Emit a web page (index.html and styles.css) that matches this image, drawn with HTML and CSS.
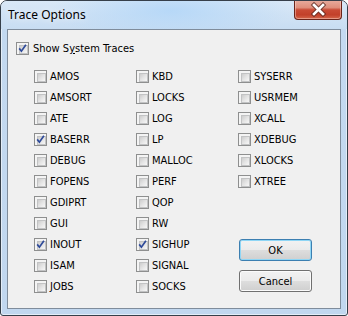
FILE: index.html
```html
<!DOCTYPE html>
<html>
<head>
<meta charset="utf-8">
<link rel="stylesheet" href="styles.css">
</head>
<body>
<div class="window">
  <div class="titlebar">
    <span class="title">Trace Options</span>
    <div class="close">
      <svg width="45" height="18" viewBox="0 0 45 18">
        <path d="M18 4 L27 13 M27 4 L18 13" stroke="#5a2a22" stroke-width="4.6" stroke-linecap="square" fill="none" opacity="0.75"/>
        <path d="M18 4 L27 13 M27 4 L18 13" stroke="#ffffff" stroke-width="2.6" stroke-linecap="square" fill="none"/>
      </svg>
    </div>
  </div>
  <div class="frame">
    <div class="client">
      <div class="check header">
        <span class="cb checked"><svg width="11" height="11" viewBox="0 0 11 11"><path d="M2.2 5.4 L4.4 8.2 L8.9 1.8" stroke="#2f4b9a" stroke-width="1.7" fill="none"/></svg></span>
        <span>Show S<u>y</u>stem Traces</span>
      </div>
      <div class="grid">
        <div class="check"><span class="cb"></span><span>AMOS</span></div>
        <div class="check"><span class="cb"></span><span>AMSORT</span></div>
        <div class="check"><span class="cb"></span><span>ATE</span></div>
        <div class="check"><span class="cb checked"><svg width="11" height="11" viewBox="0 0 11 11"><path d="M2.2 5.4 L4.4 8.2 L8.9 1.8" stroke="#2f4b9a" stroke-width="1.7" fill="none"/></svg></span><span>BASERR</span></div>
        <div class="check"><span class="cb"></span><span>DEBUG</span></div>
        <div class="check"><span class="cb"></span><span>FOPENS</span></div>
        <div class="check"><span class="cb"></span><span>GDIPRT</span></div>
        <div class="check"><span class="cb"></span><span>GUI</span></div>
        <div class="check"><span class="cb checked"><svg width="11" height="11" viewBox="0 0 11 11"><path d="M2.2 5.4 L4.4 8.2 L8.9 1.8" stroke="#2f4b9a" stroke-width="1.7" fill="none"/></svg></span><span>INOUT</span></div>
        <div class="check"><span class="cb"></span><span>ISAM</span></div>
        <div class="check"><span class="cb"></span><span>JOBS</span></div>

        <div class="check"><span class="cb"></span><span>KBD</span></div>
        <div class="check"><span class="cb"></span><span>LOCKS</span></div>
        <div class="check"><span class="cb"></span><span>LOG</span></div>
        <div class="check"><span class="cb"></span><span>LP</span></div>
        <div class="check"><span class="cb"></span><span>MALLOC</span></div>
        <div class="check"><span class="cb"></span><span>PERF</span></div>
        <div class="check"><span class="cb"></span><span>QOP</span></div>
        <div class="check"><span class="cb"></span><span>RW</span></div>
        <div class="check"><span class="cb checked"><svg width="11" height="11" viewBox="0 0 11 11"><path d="M2.2 5.4 L4.4 8.2 L8.9 1.8" stroke="#2f4b9a" stroke-width="1.7" fill="none"/></svg></span><span>SIGHUP</span></div>
        <div class="check"><span class="cb"></span><span>SIGNAL</span></div>
        <div class="check"><span class="cb"></span><span>SOCKS</span></div>

        <div class="check"><span class="cb"></span><span>SYSERR</span></div>
        <div class="check"><span class="cb"></span><span>USRMEM</span></div>
        <div class="check"><span class="cb"></span><span>XCALL</span></div>
        <div class="check"><span class="cb"></span><span>XDEBUG</span></div>
        <div class="check"><span class="cb"></span><span>XLOCKS</span></div>
        <div class="check"><span class="cb"></span><span>XTREE</span></div>

        <div class="buttons">
          <button class="btn default">OK</button>
          <button class="btn">Cancel</button>
        </div>
      </div>
    </div>
  </div>
</div>
</body>
</html>
```

FILE: styles.css
```css
html, body {
  margin: 0;
  padding: 0;
  background: #ffffff;
}

.window {
  width: 348px;
  height: 316px;
  box-sizing: border-box;
  border: 1px solid #363f4a;
  border-radius: 7px 7px 3px 3px;
  background: linear-gradient(180deg, #cfe2f5 0px, #c3d9f0 28px, #c1d7ef 100%);
  box-shadow: inset 0 0 0 1px rgba(255, 255, 255, 0.55);
  display: flex;
  flex-direction: column;
  overflow: hidden;
}

.titlebar {
  height: 28px;
  flex: none;
  display: flex;
  justify-content: space-between;
  align-items: flex-start;
  background:
    radial-gradient(ellipse 120px 30px at 170px 10px, rgba(180, 215, 248, 0.9), rgba(180, 215, 248, 0) 100%),
    linear-gradient(180deg, #d9e8f7 0%, #c8ddf2 100%);
}

.title {
  font-family: "Noto Sans", "Open Sans", sans-serif;
  font-size: 12px;
  line-height: 16px;
  color: #000;
  margin: 6px 0 0 7px;
  text-shadow: 0 0 6px rgba(255, 255, 255, 0.9);
}

.close {
  width: 48px;
  height: 20px;
  box-sizing: border-box;
  margin: -1px 5px 0 0;
  border: 1px solid #6a241a;
  border-top: none;
  border-radius: 0 0 4px 4px;
  background: linear-gradient(180deg, #e8ad9f 0%, #de8e7b 40%, #c94b35 52%, #c2402a 78%, #d4674b 100%);
  box-shadow: inset 0 0 0 1px rgba(255, 220, 210, 0.45);
  display: flex;
  align-items: center;
  justify-content: center;
}

.close svg {
  display: block;
}

.frame {
  flex: 1;
  display: flex;
  padding: 0 7px 6px 6px;
}

.client {
  flex: 1;
  border: 1px solid #7f8c9b;
  background: #f0f0f0;
  padding: 8px 0 0 8px;
  font-family: "DejaVu Sans Condensed", "DejaVu Sans", sans-serif;
  font-stretch: condensed;
  font-size: 11px;
  color: #000;
}

.check {
  display: flex;
  align-items: center;
  gap: 3px;
  height: 21px;
  white-space: nowrap;
}

.header {
  gap: 4px;
}

.cb {
  width: 13px;
  height: 13px;
  box-sizing: border-box;
  flex: none;
  border: 1px solid #8e8f8f;
  background: #f4f4f4;
  padding: 2px;
  position: relative;
}

.cb::before {
  content: "";
  display: block;
  width: 7px;
  height: 7px;
  border: 1px solid #c2c3c4;
  background: linear-gradient(135deg, #cdcdcd 0%, #e4e4e4 50%, #f7f7f7 100%);
}

.cb svg {
  position: absolute;
  left: 0;
  top: 0;
}

.grid {
  display: grid;
  grid-template-columns: repeat(3, 102px);
  grid-template-rows: repeat(11, 21px);
  grid-auto-flow: column;
  margin: 7px 0 0 18px;
}

.buttons {
  grid-column: 3;
  grid-row: 9 / 12;
  display: flex;
  flex-direction: column;
  gap: 9px;
  padding: 5px 0 0 1px;
}

.btn {
  width: 73px;
  height: 22px;
  box-sizing: border-box;
  border: 1px solid #707070;
  border-radius: 3px;
  background: linear-gradient(180deg, #f2f2f2 0%, #ebebeb 48%, #dddddd 52%, #cfcfcf 100%);
  box-shadow: inset 0 0 0 1px #fbfbfb;
  font-family: "DejaVu Sans Condensed", "DejaVu Sans", sans-serif;
  font-stretch: condensed;
  font-size: 11px;
  color: #000;
  padding: 0;
  margin: 0;
}

.btn.default {
  border-color: #3c7fb1;
  box-shadow: inset 0 0 0 1px #8fd6f5;
}
```
